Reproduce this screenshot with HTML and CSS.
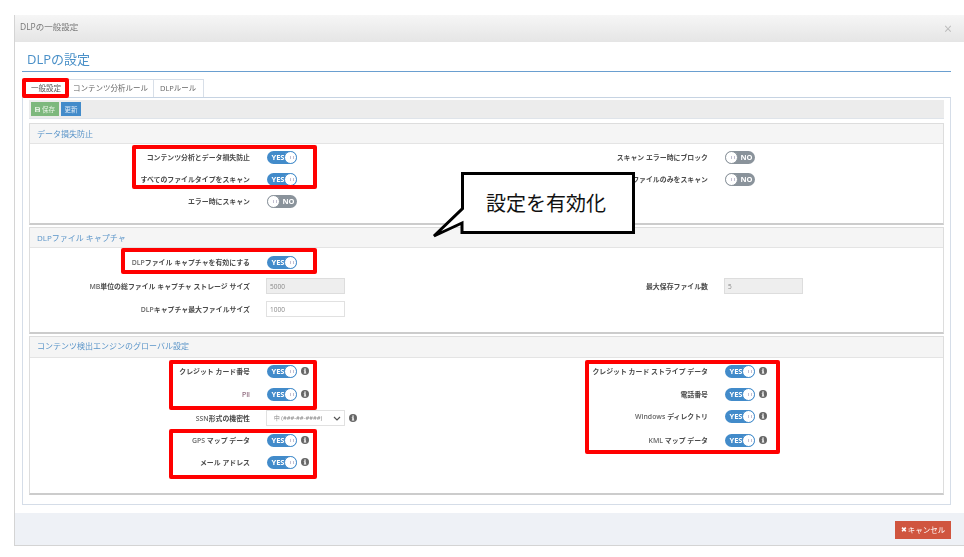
FILE: index.html
```html
<!DOCTYPE html>
<html lang="ja">
<head>
<meta charset="utf-8">
<title>DLPの一般設定</title>
<link rel="stylesheet" href="styles.css">
</head>
<body>
<div class="page">
  <div class="modal">
    <header class="modal-head"><span>DLPの一般設定</span><span class="close">×</span></header>
    <main class="modal-body">
      <h1 class="title">DLPの設定</h1>
      <nav class="tabs">
        <span class="tab active">一般設定</span>
        <span class="tab">コンテンツ分析ルール</span>
        <span class="tab tab-last">DLPルール</span>
      </nav>
      <section class="tab-content">
        <div class="toolbar">
          <button class="btn btn-save"><svg class="save-ico" viewBox="0 0 8 8"><path d="M0 0h6.500L8 1.500V8H0z" fill="#dfeedd"/><path d="M2 1h4v2H2zM2 5h4v2H2z" fill="#7db87d"/></svg>保存</button>
          <button class="btn btn-update">更新</button>
        </div>

        <div class="panel p1">
          <div class="panel-head">データ損失防止</div>
          <div class="panel-body">
            <div class="col">
              <div class="row"><label>コンテンツ分析とデータ損失防止</label><span class="toggle on"><b>YES</b><i></i></span></div>
              <div class="row"><label>すべてのファイルタイプをスキャン</label><span class="toggle on"><b>YES</b><i></i></span></div>
              <div class="row"><label>エラー時にスキャン</label><span class="toggle off"><i></i><b>NO</b></span></div>
            </div>
            <div class="col">
              <div class="row"><label>スキャン エラー時にブロック</label><span class="toggle off"><i></i><b>NO</b></span></div>
              <div class="row"><label>特定のファイルのみをスキャン</label><span class="toggle off"><i></i><b>NO</b></span></div>
            </div>
          </div>
        </div>

        <div class="panel p2">
          <div class="panel-head">DLPファイル キャプチャ</div>
          <div class="panel-body">
            <div class="col">
              <div class="row"><label><span class="lat">DLP</span>ファイル キャプチャを有効にする</label><span class="toggle on"><b>YES</b><i></i></span></div>
              <div class="row gap2"><label><span class="lat">MB</span>単位の総ファイル キャプチャ ストレージ サイズ</label><input class="field" value="5000" disabled></div>
              <div class="row gap1"><label><span class="lat">DLP</span>キャプチャ最大ファイルサイズ</label><input class="field" value="1000"></div>
            </div>
            <div class="col">
              <div class="row"></div>
              <div class="row gap2"><label>最大保存ファイル数</label><input class="field" value="5" disabled></div>
            </div>
          </div>
        </div>

        <div class="panel p3">
          <div class="panel-head">コンテンツ検出エンジンのグローバル設定</div>
          <div class="panel-body">
            <div class="col">
              <div class="row"><label>クレジット カード番号</label><span class="toggle on"><b>YES</b><i></i></span><svg class="info" viewBox="0 0 16 16"><circle cx="8" cy="8" r="8"/><path d="M6.500 3h3v2.400h-3zM5.600 6.600h3.900v5h1v1.600H5.600v-1.600h1v-3.400h-1z"/></svg></div>
              <div class="row gap1"><label class="pii">PII</label><span class="toggle on"><b>YES</b><i></i></span><svg class="info" viewBox="0 0 16 16"><circle cx="8" cy="8" r="8"/><path d="M6.500 3h3v2.400h-3zM5.600 6.600h3.900v5h1v1.600H5.600v-1.600h1v-3.400h-1z"/></svg></div>
              <div class="row gap2"><label><span class="lat">SSN</span>形式の機密性</label>
                <select class="field select"><option>中 (###-##-####)</option></select>
                <svg class="info" viewBox="0 0 16 16"><circle cx="8" cy="8" r="8"/><path d="M6.500 3h3v2.400h-3zM5.600 6.600h3.900v5h1v1.600H5.600v-1.600h1v-3.400h-1z"/></svg></div>
              <div class="row"><label><span class="lat">GPS</span> マップ データ</label><span class="toggle on"><b>YES</b><i></i></span><svg class="info" viewBox="0 0 16 16"><circle cx="8" cy="8" r="8"/><path d="M6.500 3h3v2.400h-3zM5.600 6.600h3.900v5h1v1.600H5.600v-1.600h1v-3.400h-1z"/></svg></div>
              <div class="row"><label>メール アドレス</label><span class="toggle on"><b>YES</b><i></i></span><svg class="info" viewBox="0 0 16 16"><circle cx="8" cy="8" r="8"/><path d="M6.500 3h3v2.400h-3zM5.600 6.600h3.900v5h1v1.600H5.600v-1.600h1v-3.400h-1z"/></svg></div>
            </div>
            <div class="col">
              <div class="row"><label>クレジット カード ストライプ データ</label><span class="toggle on"><b>YES</b><i></i></span><svg class="info" viewBox="0 0 16 16"><circle cx="8" cy="8" r="8"/><path d="M6.500 3h3v2.400h-3zM5.600 6.600h3.900v5h1v1.600H5.600v-1.600h1v-3.400h-1z"/></svg></div>
              <div class="row gap1"><label>電話番号</label><span class="toggle on"><b>YES</b><i></i></span><svg class="info" viewBox="0 0 16 16"><circle cx="8" cy="8" r="8"/><path d="M6.500 3h3v2.400h-3zM5.600 6.600h3.900v5h1v1.600H5.600v-1.600h1v-3.400h-1z"/></svg></div>
              <div class="row"><label><span class="lat">Windows</span> ディレクトリ</label><span class="toggle on"><b>YES</b><i></i></span><svg class="info" viewBox="0 0 16 16"><circle cx="8" cy="8" r="8"/><path d="M6.500 3h3v2.400h-3zM5.600 6.600h3.900v5h1v1.600H5.600v-1.600h1v-3.400h-1z"/></svg></div>
              <div class="row gap2"><label><span class="lat">KML</span> マップ データ</label><span class="toggle on"><b>YES</b><i></i></span><svg class="info" viewBox="0 0 16 16"><circle cx="8" cy="8" r="8"/><path d="M6.500 3h3v2.400h-3zM5.600 6.600h3.900v5h1v1.600H5.600v-1.600h1v-3.400h-1z"/></svg></div>
            </div>
          </div>
        </div>
      </section>
    </main>
    <footer class="modal-foot">
      <button class="btn btn-cancel"><span class="x">✖</span>キャンセル</button>
    </footer>
  </div>

  <div class="mark m-tab"></div>
  <div class="mark m-a"></div>
  <div class="mark m-b"></div>
  <div class="mark m-c"></div>
  <div class="mark m-d"></div>
  <div class="mark m-e"></div>

  <div class="callout">
    <svg class="callout-shape" viewBox="0 0 204 66"><path d="M31.500 1.500V36.500L3 64L31 51V60.500H202.500V1.500Z" fill="#fff" stroke="#000" stroke-width="3"/></svg>
    <span class="callout-text">設定を有効化</span>
  </div>
</div>
</body>
</html>
```

FILE: styles.css
```css
* { box-sizing: border-box; }
html, body { margin: 0; padding: 0; background: #fff; }
body { font-family: "Open Sans", "Noto Sans CJK JP", sans-serif; color: #555; }
.page { position: relative; width: 964px; height: 557px; overflow: hidden; }

.modal {
  margin: 15px 0 0 14px; width: 950px; height: 531px;
  display: flex; flex-direction: column;
  border-left: 1px solid #d4d4d4; border-bottom: 1px solid #d4d4d4;
  filter: blur(0.35px);
}
.modal-head {
  height: 27px; flex: none; padding: 0 12px 6px 5px;
  display: flex; justify-content: space-between; align-items: center;
  background: linear-gradient(#f6f6f6, #e5e5e5);
  font-size: 8.500px; color: #777;
}
.close { font-size: 14px; color: #bbb; margin-top: 6px; }
.modal-body { flex: 1; padding: 0 0 0 7px; background: #fff; }
.title {
  margin: 0; width: 929px; height: 30px; padding: 7px 0 0 5px;
  border-bottom: 1px solid #6a9fd0;
  font-size: 13px; line-height: 20px; font-weight: 400; color: #4a90c8;
}
.tabs { display: flex; height: 18px; margin-top: 7px; font-size: 7.500px; color: #666; }
.tab {
  display: flex; align-items: center; padding: 0 5px 2px;
  border: 1px solid #d8dfe8; border-left: 0; border-bottom: 0; background: #fff;
}
.tab.active { width: 46px; padding: 0 0 2px 8px; color: #555; border-left: 1px solid #d8dfe8; }
.tab.tab-last { padding: 0 7px 2px 6px; }
.tab-content {
  width: 929px; height: 408px; padding: 2px 6px 0;
  border: 1px solid #d5dde8; border-top-color: #c6d3e2;
}
.toolbar {
  height: 19px; padding: 2px; display: flex; gap: 2px;
  background: #ececec; border-bottom: 1px solid #dfe4ea;
}
.btn {
  border: 0; padding: 0; margin: 0; color: #fff; font: inherit;
  display: flex; align-items: center; justify-content: center;
}
.btn-save { width: 28px; height: 14px; background: #7db87d; font-size: 6.500px; color: #e8f3e6; }
.save-ico { width: 5px; height: 5px; margin-right: 2px; }
.btn-update { width: 20px; height: 14px; background: #428bca; font-size: 6.500px; color: #dce9f5; }

.panel { width: 915px; border: 1px solid #ddd; border-bottom: 2px solid #ccc; background: #fff; }
.p1 { height: 102px; margin-top: 4px; }
.p2 { height: 107px; margin-top: 2px; }
.p3 { height: 159px; margin-top: 2px; }
.panel-head {
  height: 20px; padding: 0 7px; background: #f5f5f5; border-bottom: 1px solid #e4e4e4;
  display: flex; align-items: center; font-size: 8px; color: #5b95c9;
}
.p2 .panel-head { padding-bottom: 1px; }
.p3 .panel-head { height: 21px; padding-bottom: 3px; }
.panel-body { display: flex; padding-top: 2px; }
.p2 .panel-body { padding-top: 3px; }
.p3 .panel-body { padding-top: 2px; }
.col { width: 457px; flex: none; }
.row { display: flex; align-items: center; height: 22px; }
.gap1 { margin-top: 1px; }
.gap2 { margin-top: 2px; }
.row label {
  width: 220px; margin-right: 17px; flex: none; text-align: right;
  font-size: 6.900px; font-weight: 700; color: #4a4a4a; white-space: nowrap;
}
.col + .col .row label { width: 221px; }
.col + .col .row .field { margin-left: -1px; }
.lat { font-weight: 600; color: #666; }
.row label.pii { color: #6b3b55; font-weight: 400; }

.toggle {
  width: 30px; height: 13px; border-radius: 7px; flex: none;
  display: flex; align-items: center; overflow: hidden;
  font-size: 7.500px; color: #fff;
}
.toggle b { font-weight: 700; flex: 1; text-align: center; line-height: 13px; }
.toggle i {
  position: relative; width: 13px; height: 13px; flex: none; border-radius: 50%;
  background: #fff; border: 1px solid #428bca;
}
.toggle i::after {
  content: ""; position: absolute; left: 4.500px; top: 4px; width: 2px; height: 3px;
  border-left: 1px solid #c3bfd2; border-right: 1px solid #c3bfd2;
}
.toggle.on { background: #428bca; }
.toggle.on i { margin-left: -3px; }
.toggle.on b { padding-left: 2px; }
.toggle.off { background: #8a939b; }
.toggle.off i { border-color: #8a939b; }

.info { width: 8px; height: 8px; margin-left: 4px; flex: none; fill: #666; margin-top: -1px; }
.info path { fill: #fff; }
.field {
  width: 79px; height: 16px; margin: 0 0 0 -1px; padding: 0 3px; flex: none;
  border: 1px solid #e1e1e1; background: #fff; border-radius: 0;
  font: 400 6.500px "Open Sans", sans-serif; color: #888;
}
.field:disabled { background: #eee; border-color: #ddd; color: #888; }
.select {
  appearance: none; font: 400 5.800px "Open Sans", "Noto Sans CJK JP", sans-serif; padding: 0 12px 0 7px;
  background: #fff url("data:image/svg+xml,%3Csvg xmlns='http://www.w3.org/2000/svg' width='8' height='5'%3E%3Cpath d='M1 1l3 3 3-3' fill='none' stroke='%23555' stroke-width='1.200'/%3E%3C/svg%3E") no-repeat right 3px center;
}
.select + .info { margin-left: 4px; margin-top: 0; }

.modal-foot {
  height: 32px; flex: none; background: #eef1f6;
  display: flex; justify-content: flex-end; align-items: center;
  padding: 0 13px 0 0; 
}
.btn-cancel {
  width: 56px; height: 18px; background: #d0553f; font-size: 7.500px; margin-top: 1px;
}
.x { font-size: 7px; margin-right: 1px; }

.mark { position: absolute; border: 4px solid #f00; border-radius: 2px; }
.m-tab { left: 22px; top: 78px; width: 47px; height: 20px; }
.m-a { left: 132px; top: 145px; width: 185px; height: 44px; }
.m-b { left: 121px; top: 248px; width: 196px; height: 26px; }
.m-c { left: 169px; top: 360px; width: 148px; height: 50px; }
.m-d { left: 169px; top: 429px; width: 148px; height: 50px; }
.m-e { left: 585px; top: 360px; width: 195px; height: 94px; }

.callout { position: absolute; left: 431px; top: 172px; width: 204px; height: 66px; }
.callout-shape { display: block; width: 204px; height: 66px; }
.callout-text {
  position: absolute; left: 55px; top: 16px; white-space: nowrap;
  font: 400 20px/30px "Noto Sans CJK JP", sans-serif; color: #111;
}
```
